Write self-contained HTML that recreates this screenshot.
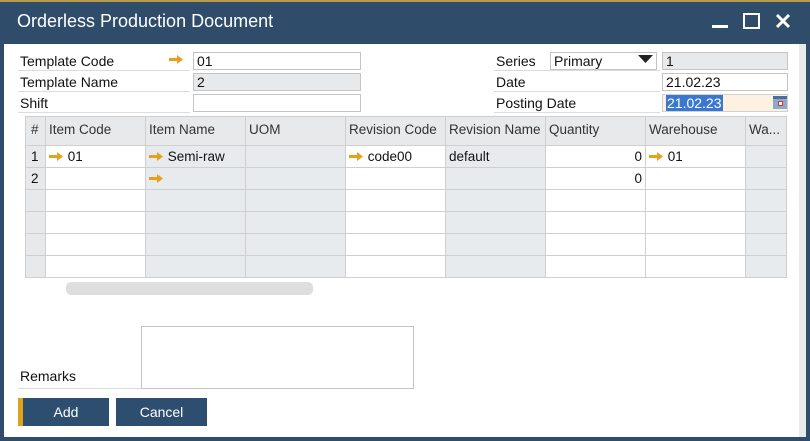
<!DOCTYPE html>
<html><head><style>
*{margin:0;padding:0;box-sizing:border-box}
body{width:810px;height:441px;background:#2f4d6b;position:relative;overflow:hidden;font-family:"Liberation Sans","DejaVu Sans",sans-serif;font-size:14px;color:#111}
.a{position:absolute}
#top{left:0;top:0;width:810px;height:2px;background:#b79a45}
#title{left:17px;top:11px;color:#fff;font-size:18px;letter-spacing:0}
#body{left:4px;top:44px;width:802px;height:393px;background:#fff}
#strip{left:799px;top:44px;width:7px;height:393px;background:#e9eaeb}
.lbl{position:absolute;font-size:14px;line-height:18px}
.ul{position:absolute;height:1px;background:#dcdcdc}
.fld{position:absolute;border:1px solid #c4c4c4;background:#fff;height:18px;font-size:14px;line-height:16px;padding-left:3px}
.g{background:#e7e9eb}
.arr{position:absolute;width:15px;height:9px}
table{position:absolute;left:25px;top:116px;width:761px;border-collapse:collapse;table-layout:fixed}
td{border:1px solid #cfcfcf;height:22px;font-size:13.5px;padding:0 3px;white-space:nowrap;overflow:hidden;line-height:20px;position:relative}
tr.h td{height:29px;background:#e8e9ea;color:#333;vertical-align:top;padding-top:3px}
td.n{background:#e8e9ea;padding-left:5px}
td.gr{background:#e8ebee}
td.r{text-align:right}
.btn{position:absolute;top:398px;height:28px;background:#2d4e6e;color:#fff;font-size:14px;text-align:center;line-height:28px}
</style></head><body>
<div class="a" id="top"></div>
<div class="a" id="title">Orderless Production Document</div>
<div class="a" style="left:712px;top:25px;width:16px;height:3px;background:#fff"></div>
<div class="a" style="left:743px;top:13px;width:17px;height:16px;border:2.5px solid #fff"></div>
<svg class="a" style="left:775px;top:13px" width="16" height="16"><path d="M2 2L14 14M14 2L2 14" stroke="#fff" stroke-width="3"/></svg>
<div class="a" id="body"></div>
<div class="a" id="strip"></div>

<div class="lbl" style="left:20px;top:52px">Template Code</div>
<div class="ul" style="left:18px;top:70px;width:172px"></div>
<div class="lbl" style="left:20px;top:73px">Template Name</div>
<div class="ul" style="left:18px;top:91px;width:172px"></div>
<div class="lbl" style="left:20px;top:94px">Shift</div>
<div class="ul" style="left:18px;top:112px;width:172px"></div>
<svg class="arr" style="left:169px;top:55px" viewBox="0 0 15 9"><path d="M0 3h8V0l6 4.5L8 9V6H0z" fill="#e3a21a"/></svg>
<div class="fld" style="left:193px;top:52px;width:168px">01</div>
<div class="fld g" style="left:193px;top:73px;width:168px">2</div>
<div class="fld" style="left:193px;top:94px;width:168px"></div>

<div class="lbl" style="left:496px;top:52px">Series</div>
<div class="ul" style="left:494px;top:70px;width:166px"></div>
<div class="lbl" style="left:496px;top:73px">Date</div>
<div class="ul" style="left:494px;top:91px;width:166px"></div>
<div class="lbl" style="left:496px;top:94px">Posting Date</div>
<div class="ul" style="left:494px;top:112px;width:166px"></div>
<div class="fld" style="left:550px;top:52px;width:107px">Primary</div>
<svg class="a" style="left:638px;top:55px" width="15" height="9"><path d="M0 0h15L7.5 8z" fill="#222"/></svg>
<div class="fld g" style="left:662px;top:52px;width:126px">1</div>
<div class="fld" style="left:662px;top:73px;width:126px">21.02.23</div>
<div class="fld" style="left:662px;top:94px;width:126px;background:#fdf2e2;border-color:#d0d0d0"><span style="background:#3a78d0;color:#fff;padding:0 1px">21.02.23</span></div>
<div class="a" style="left:773px;top:96px;width:14px;height:13px;background:#8fa9c9;border-top:3px solid #4b6f9c"><div style="margin:2px 0 0 5px;width:5px;height:5px;background:#fff;border:1px solid #d33"></div></div>

<table>
<colgroup><col style="width:20px"><col style="width:100px"><col style="width:100px"><col style="width:100px"><col style="width:100px"><col style="width:100px"><col style="width:100px"><col style="width:100px"><col style="width:41px"></colgroup>
<tr class="h"><td style="padding-left:5px">#</td><td>Item Code</td><td>Item Name</td><td>UOM</td><td>Revision Code</td><td>Revision Name</td><td>Quantity</td><td>Warehouse</td><td>Wa...</td></tr>
<tr><td class="n">1</td><td><svg width="15" height="9" viewBox="0 0 15 9"><path d="M0 3h8V0l6 4.5L8 9V6H0z" fill="#e3a21a"/></svg> 01</td><td class="gr"><svg width="15" height="9" viewBox="0 0 15 9"><path d="M0 3h8V0l6 4.5L8 9V6H0z" fill="#e3a21a"/></svg> Semi-raw</td><td class="gr"></td><td><svg width="15" height="9" viewBox="0 0 15 9"><path d="M0 3h8V0l6 4.5L8 9V6H0z" fill="#e3a21a"/></svg> code00</td><td class="gr">default</td><td class="r">0</td><td><svg width="15" height="9" viewBox="0 0 15 9"><path d="M0 3h8V0l6 4.5L8 9V6H0z" fill="#e3a21a"/></svg> 01</td><td class="gr"></td></tr>
<tr><td class="n">2</td><td></td><td class="gr"><svg width="15" height="9" viewBox="0 0 15 9"><path d="M0 3h8V0l6 4.5L8 9V6H0z" fill="#e3a21a"/></svg></td><td class="gr"></td><td></td><td class="gr"></td><td class="r">0</td><td></td><td class="gr"></td></tr>
<tr><td class="n"></td><td></td><td class="gr"></td><td class="gr"></td><td></td><td class="gr"></td><td></td><td></td><td class="gr"></td></tr>
<tr><td class="n"></td><td></td><td class="gr"></td><td class="gr"></td><td></td><td class="gr"></td><td></td><td></td><td class="gr"></td></tr>
<tr><td class="n"></td><td></td><td class="gr"></td><td class="gr"></td><td></td><td class="gr"></td><td></td><td></td><td class="gr"></td></tr>
<tr><td class="n"></td><td></td><td class="gr"></td><td class="gr"></td><td></td><td class="gr"></td><td></td><td></td><td class="gr"></td></tr>
</table>
<div class="a" style="left:66px;top:282px;width:247px;height:13px;background:#dedede;border-radius:5px"></div>

<div class="a" style="left:141px;top:326px;width:273px;height:63px;border:1px solid #c4c4c4"></div>
<div class="lbl" style="left:20px;top:367px">Remarks</div>
<div class="ul" style="left:18px;top:388px;width:123px"></div>

<div class="btn" style="left:18px;width:91px;border-left:5px solid #e0a11b">Add</div>
<div class="btn" style="left:116px;width:91px">Cancel</div>
</body></html>
